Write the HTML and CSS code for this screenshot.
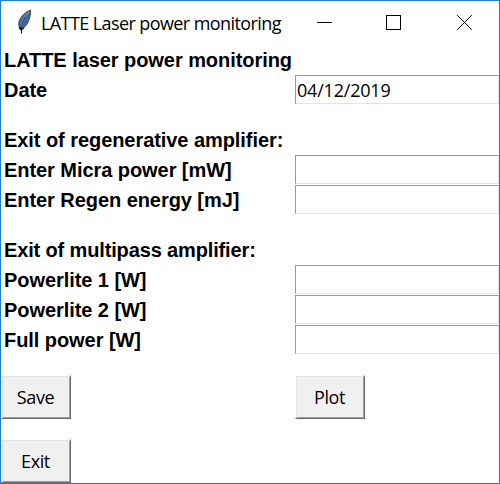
FILE: index.html
```html
<!DOCTYPE html>
<html lang="en">
<head>
<meta charset="utf-8">
<title>LATTE Laser power monitoring</title>
<link rel="stylesheet" href="styles.css">
</head>
<body>
<main class="window">
  <header class="titlebar">
    <svg class="feather" width="16" height="26" viewBox="0 0 16 26">
      <path d="M13.5 1.2C9 2.5 4 7 2.2 12C1.3 15 1.8 18 3.2 21C7 19.5 10 16 11.5 12C13 8 13.9 4.5 13.5 1.2Z" fill="#3c6ba8" stroke="#4c4c4c" stroke-width="1"/>
      <path d="M12 3C8 6 5 11 3.8 18" fill="none" stroke="#87909a" stroke-width="1.2"/>
      <path d="M8 8C6 11.500 4.500 15 3.500 19.500" fill="none" stroke="#333" stroke-width=".8"/>
      <path d="M4.500 18.500V24.500" fill="none" stroke="#111" stroke-width="1"/>
      <path d="M2.500 18L4.500 20.500L7 18.500" fill="none" stroke="#111" stroke-width="1.3"/>
    </svg>
    <h1 class="title">LATTE Laser power monitoring</h1>
    <nav class="controls">
      <svg class="minimize" width="15" height="15" viewBox="0 0 15 15"><path d="M0 7.5H15" stroke="#000"/></svg>
      <svg width="15" height="15" viewBox="0 0 15 15"><rect x=".5" y=".5" width="14" height="14" fill="none" stroke="#000"/></svg>
      <svg class="close" width="15" height="15" viewBox="0 0 15 15"><path d="M.2 .2L14.8 14.8M14.8 .2L.2 14.8" stroke="#000"/></svg>
    </nav>
  </header>
  <form class="form">
    <span class="label heading">LATTE laser power monitoring</span>
    <label class="label" for="date">Date</label>
    <input class="entry" id="date" value="04/12/2019">
    <span class="label heading section">Exit of regenerative amplifier:</span>
    <label class="label" for="micra">Enter Micra power [mW]</label>
    <input class="entry" id="micra">
    <label class="label" for="regen">Enter Regen energy [mJ]</label>
    <input class="entry" id="regen">
    <span class="label heading section multipass">Exit of multipass amplifier:</span>
    <label class="label" for="p1">Powerlite 1 [W]</label>
    <input class="entry" id="p1">
    <label class="label" for="p2">Powerlite 2 [W]</label>
    <input class="entry" id="p2">
    <label class="label" for="full">Full power [W]</label>
    <input class="entry" id="full">
    <button class="button" type="button">Save</button>
    <button class="button" type="button">Plot</button>
    <button class="button" type="button">Exit</button>
  </form>
</main>
</body>
</html>
```
FILE: styles.css
```css
* { box-sizing: border-box; }
body { margin: 0; background: #fff; color: #000; }
.window {
  width: 500px;
  height: 484px;
  border: 1px solid #1a7fd4;
  background: #fff;
  overflow: hidden;
}
.titlebar {
  height: 44px;
  display: flex;
  align-items: flex-start;
  padding: 0 27px 0 16px;
}
.feather { margin: 8px 8px 0 0; flex: none; }
.title {
  margin: 0;
  font: 400 18px/44px "Open Sans", "Noto Sans", sans-serif;
  letter-spacing: -0.59px;
  white-space: nowrap;
}
.controls { display: flex; margin: 14px 0 0 auto; }
.controls svg { display: block; }
.controls .minimize { margin-right: 54px; }
.controls .close { margin-left: 56px; }
.form {
  display: grid;
  grid-template-columns: 294px 204px;
  grid-auto-rows: auto;
}
.label {
  height: 30px;
  padding-left: 3px;
  font: 700 20px/30px "Liberation Sans", Arial, sans-serif;
  letter-spacing: -0.06px;
  white-space: nowrap;
}
.heading { grid-column: 1 / -1; }
.section { margin-top: 20px; }
.multipass { letter-spacing: -0.14px; }
.entry {
  width: 204px;
  height: 29px;
  margin: 0 0 1px;
  padding: 1px 1px 0;
  border: 1px solid;
  border-color: #999 #e3e3e3 #e3e3e3 #999;
  border-radius: 0;
  background: #fff;
  color: #000;
  font: 400 18px/26px "Open Sans", "Noto Sans", sans-serif;
  letter-spacing: -0.2px;
  outline: none;
}
.button {
  width: 70px;
  height: 44px;
  margin: 20px 0 0;
  padding: 0 1px 0 0;
  border: 1px solid;
  border-color: #fff #696969 #696969 #fff;
  border-radius: 0;
  background: #f0f0f0;
  box-shadow: inset 1px 1px #e3e3e3, inset -1px -1px #a0a0a0;
  color: #000;
  font: 400 18px/40px "Open Sans", "Noto Sans", sans-serif;
  letter-spacing: -0.4px;
}
```
